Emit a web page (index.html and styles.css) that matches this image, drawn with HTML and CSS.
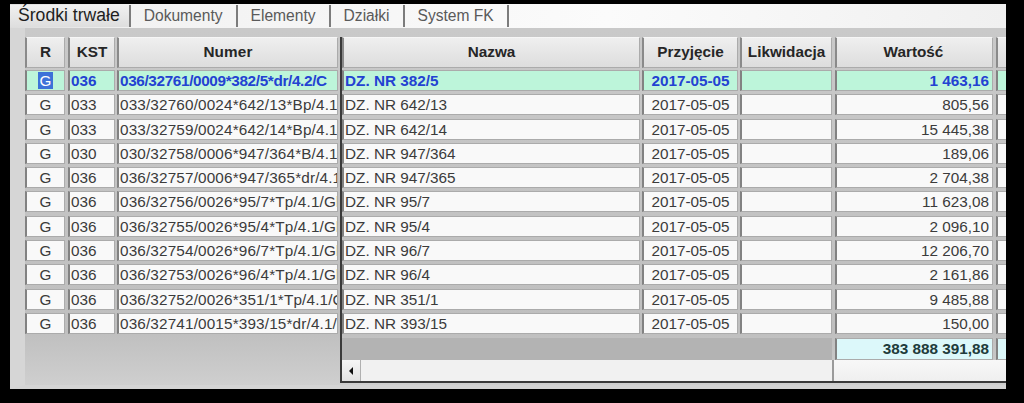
FILE: index.html
```html
<!DOCTYPE html>
<html lang="pl">
<head>
    <meta charset="UTF-8">
    <meta name="viewport" content="width=device-width, initial-scale=1.0">
    <title>Środki trwałe</title>
    <link rel="stylesheet" href="styles.css">
</head>
<body>
    <div class="window">
        <div class="tabs">
            <div class="tab active">Środki trwałe</div>
            <div class="tab">Dokumenty</div>
            <div class="tab">Elementy</div>
            <div class="tab">Działki</div>
            <div class="tab">System FK</div>
        </div>
        <div class="frame">
            <!-- frozen columns -->
            <div class="pane pane-left">
                <div class="row head">
                    <div class="cell c-r">R</div>
                    <div class="cell c-kst">KST</div>
                    <div class="cell c-num">Numer</div>
                </div>
                <div class="row selected">
                    <div class="cell c-r"><span class="mark">G</span></div>
                    <div class="cell c-kst">036</div>
                    <div class="cell c-num">036/32761/0009*382/5*dr/4.2/C</div>
                </div>
                <div class="row">
                    <div class="cell c-r">G</div>
                    <div class="cell c-kst">033</div>
                    <div class="cell c-num">033/32760/0024*642/13*Bp/4.1</div>
                </div>
                <div class="row">
                    <div class="cell c-r">G</div>
                    <div class="cell c-kst">033</div>
                    <div class="cell c-num">033/32759/0024*642/14*Bp/4.1</div>
                </div>
                <div class="row">
                    <div class="cell c-r">G</div>
                    <div class="cell c-kst">030</div>
                    <div class="cell c-num">030/32758/0006*947/364*B/4.1</div>
                </div>
                <div class="row">
                    <div class="cell c-r">G</div>
                    <div class="cell c-kst">036</div>
                    <div class="cell c-num">036/32757/0006*947/365*dr/4.1</div>
                </div>
                <div class="row">
                    <div class="cell c-r">G</div>
                    <div class="cell c-kst">036</div>
                    <div class="cell c-num">036/32756/0026*95/7*Tp/4.1/Gl</div>
                </div>
                <div class="row">
                    <div class="cell c-r">G</div>
                    <div class="cell c-kst">036</div>
                    <div class="cell c-num">036/32755/0026*95/4*Tp/4.1/Gl</div>
                </div>
                <div class="row">
                    <div class="cell c-r">G</div>
                    <div class="cell c-kst">036</div>
                    <div class="cell c-num">036/32754/0026*96/7*Tp/4.1/Gl</div>
                </div>
                <div class="row">
                    <div class="cell c-r">G</div>
                    <div class="cell c-kst">036</div>
                    <div class="cell c-num">036/32753/0026*96/4*Tp/4.1/Gl</div>
                </div>
                <div class="row">
                    <div class="cell c-r">G</div>
                    <div class="cell c-kst">036</div>
                    <div class="cell c-num">036/32752/0026*351/1*Tp/4.1/C</div>
                </div>
                <div class="row">
                    <div class="cell c-r">G</div>
                    <div class="cell c-kst">036</div>
                    <div class="cell c-num">036/32741/0015*393/15*dr/4.1/</div>
                </div>
            </div>

            <!-- scrolling columns -->
            <div class="pane pane-right">
                <div class="row head">
                    <div class="cell c-name">Nazwa</div>
                    <div class="cell c-date">Przyjęcie</div>
                    <div class="cell c-liq">Likwidacja</div>
                    <div class="cell c-val">Wartość</div>
                    <div class="cell c-extra"></div>
                </div>
                <div class="row selected">
                    <div class="cell c-name">DZ. NR 382/5</div>
                    <div class="cell c-date">2017-05-05</div>
                    <div class="cell c-liq"></div>
                    <div class="cell c-val">1 463,16</div>
                    <div class="cell c-extra"></div>
                </div>
                <div class="row">
                    <div class="cell c-name">DZ. NR 642/13</div>
                    <div class="cell c-date">2017-05-05</div>
                    <div class="cell c-liq"></div>
                    <div class="cell c-val">805,56</div>
                    <div class="cell c-extra"></div>
                </div>
                <div class="row">
                    <div class="cell c-name">DZ. NR 642/14</div>
                    <div class="cell c-date">2017-05-05</div>
                    <div class="cell c-liq"></div>
                    <div class="cell c-val">15 445,38</div>
                    <div class="cell c-extra"></div>
                </div>
                <div class="row">
                    <div class="cell c-name">DZ. NR 947/364</div>
                    <div class="cell c-date">2017-05-05</div>
                    <div class="cell c-liq"></div>
                    <div class="cell c-val">189,06</div>
                    <div class="cell c-extra"></div>
                </div>
                <div class="row">
                    <div class="cell c-name">DZ. NR 947/365</div>
                    <div class="cell c-date">2017-05-05</div>
                    <div class="cell c-liq"></div>
                    <div class="cell c-val">2 704,38</div>
                    <div class="cell c-extra"></div>
                </div>
                <div class="row">
                    <div class="cell c-name">DZ. NR 95/7</div>
                    <div class="cell c-date">2017-05-05</div>
                    <div class="cell c-liq"></div>
                    <div class="cell c-val">11 623,08</div>
                    <div class="cell c-extra"></div>
                </div>
                <div class="row">
                    <div class="cell c-name">DZ. NR 95/4</div>
                    <div class="cell c-date">2017-05-05</div>
                    <div class="cell c-liq"></div>
                    <div class="cell c-val">2 096,10</div>
                    <div class="cell c-extra"></div>
                </div>
                <div class="row">
                    <div class="cell c-name">DZ. NR 96/7</div>
                    <div class="cell c-date">2017-05-05</div>
                    <div class="cell c-liq"></div>
                    <div class="cell c-val">12 206,70</div>
                    <div class="cell c-extra"></div>
                </div>
                <div class="row">
                    <div class="cell c-name">DZ. NR 96/4</div>
                    <div class="cell c-date">2017-05-05</div>
                    <div class="cell c-liq"></div>
                    <div class="cell c-val">2 161,86</div>
                    <div class="cell c-extra"></div>
                </div>
                <div class="row">
                    <div class="cell c-name">DZ. NR 351/1</div>
                    <div class="cell c-date">2017-05-05</div>
                    <div class="cell c-liq"></div>
                    <div class="cell c-val">9 485,88</div>
                    <div class="cell c-extra"></div>
                </div>
                <div class="row">
                    <div class="cell c-name">DZ. NR 393/15</div>
                    <div class="cell c-date">2017-05-05</div>
                    <div class="cell c-liq"></div>
                    <div class="cell c-val">150,00</div>
                    <div class="cell c-extra"></div>
                </div>
                <div class="totals">
                    <div class="totals-blank"></div>
                    <div class="cell c-val sum">383 888 391,88</div>
                    <div class="cell c-extra sum"></div>
                </div>
                <div class="hscroll">
                    <div class="scrollbar">
                        <div class="arrow-btn"><span class="arrow"></span></div>
                        <div class="track"></div>
                    </div>
                    <div class="hscroll-rest"></div>
                </div>
            </div>
        </div>
    </div>
</body>
</html>
```

FILE: styles.css
```css
body, html {
    margin: 0;
    padding: 0;
    background-color: #000;
    font-family: "Liberation Sans", Arial, sans-serif;
}
.window {
    margin: 4px 0 0 10px;
    width: 996px;
    height: 385px;
    overflow: hidden;
}
.tabs {
    height: 24px;
    display: flex;
    align-items: center;
    background: linear-gradient(to right, #dcdcdc 0, #f2f2f2 12%, #fbfbfb 60%, #f0f0f0 100%);
}
.tab {
    font-size: 15.6px;
    color: #5a5a5a;
    padding: 0 13px;
    height: 22px;
    line-height: 21px;
    border-right: 2px solid #7c7c7c;
}
.tab.active {
    font-size: 17.6px;
    color: #1e1e1e;
    padding: 0 9px 0 8px;
    background: linear-gradient(#f0f0f0, #dedede);
}
.frame {
    display: flex;
    height: 361px;
    box-sizing: border-box;
    padding-top: 9px;
    background: linear-gradient(#c9c9c9, #bfbfbf 85%, #cfcfcf);
    border-left: 15px solid #d6d6d6;
    border-bottom: 4px solid #d4d4d4;
}
.pane {
    display: flex;
    flex-direction: column;
    overflow: hidden;
}
.pane-left {
    width: 315px;
    flex-shrink: 0;
}
.pane-right {
    width: 666px;
    flex-shrink: 0;
    border-left: 2px solid #3a3a3a;
    box-sizing: border-box;
    align-self: flex-start;
    border-bottom: 2px solid #3a3a3a;
}
.row {
    display: flex;
    height: 24.3px;
    flex-shrink: 0;
}
.cell {
    height: 21px;
    box-sizing: border-box;
    flex-shrink: 0;
    font-size: 15.3px;
    line-height: 19px;
    color: #3b3b3b;
    background-color: #f9f9f9;
    border: 1px solid #ababab;
    border-left: 2px solid #828282;
    padding: 0 1px;
    white-space: nowrap;
    overflow: hidden;
}
.row.head {
    height: 31px;
    margin-bottom: 2px;
}
.row.head .cell {
    height: 31px;
    line-height: 28px;
    font-weight: bold;
    color: #262626;
    text-align: center;
    background: linear-gradient(#efefef, #dddddd);
    border-top: 1px solid #f6f6f6;
    border-left: 2px solid #8a8a8a;
}
.row.selected .cell {
    background-color: #bdf5da;
    color: #2342d2;
    font-weight: bold;
}
.mark {
    background-color: #3c72d8;
    color: #fff;
    font-weight: normal;
    padding: 0 2px;
}
/* column widths and gaps */
.c-r {
    width: 40px;
    margin-right: 3px;
    text-align: center;
}
.c-kst {
    width: 47px;
    margin-right: 2px;
}
.c-num {
    width: 221px;
    letter-spacing: 0.15px;
}
.row.selected .c-num {
    letter-spacing: -0.35px;
}
.c-name {
    width: 298px;
    margin-right: 2px;
}
.c-date {
    width: 96px;
    margin-right: 2px;
    text-align: center;
}
.c-liq {
    width: 92px;
    margin-right: 3px;
}
.c-val {
    width: 158px;
    margin-right: 3px;
    text-align: right;
    padding-right: 3px;
}
.c-extra {
    width: 20px;
}
.row.head .c-val {
    text-align: center;
}
.totals {
    display: flex;
    height: 22px;
    margin-top: 1px;
}
.totals-blank {
    width: 490px;
    flex-shrink: 0;
    margin-right: 3px;
    background-color: #b3b3b3;
}
.cell.sum {
    height: 22px;
    line-height: 20px;
    background-color: #dcf8fa;
    color: #213b3b;
    font-weight: bold;
}
.hscroll {
    display: flex;
    height: 21px;
}
.scrollbar {
    width: 490px;
    flex-shrink: 0;
    display: flex;
    border-right: 2px solid #9a9a9a;
}
.arrow-btn {
    width: 18px;
    background: linear-gradient(#f6f6f6, #e2e2e2);
    border-right: 1px solid #b0b0b0;
    display: flex;
    align-items: center;
    justify-content: center;
}
.arrow {
    width: 0;
    height: 0;
    border-top: 4px solid transparent;
    border-bottom: 4px solid transparent;
    border-right: 4px solid #111;
}
.track {
    flex-grow: 1;
    background-color: #f1f1f1;
}
.hscroll-rest {
    flex-grow: 1;
    background: linear-gradient(#f8f8f8, #efefef);
}
```
